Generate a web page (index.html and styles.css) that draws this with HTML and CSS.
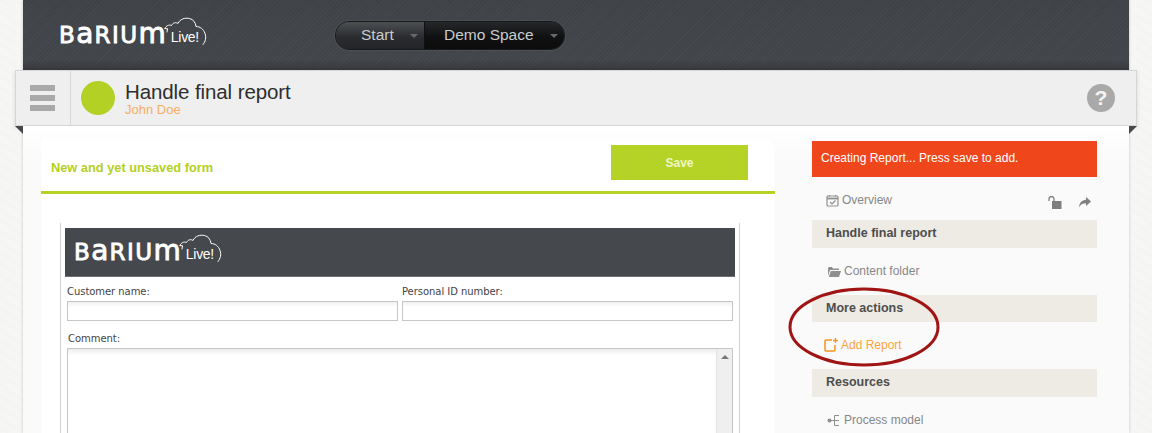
FILE: index.html
```html
<!DOCTYPE html>
<html lang="en">
<head>
<meta charset="utf-8">
<title>Handle final report</title>
<link rel="stylesheet" href="styles.css">
</head>
<body>
<div class="shell">
  <header class="top">
    <div class="logo">
      <span class="logo-word">B<span class="logo-big">a</span>RIU<span class="logo-big">m</span></span>
      <span class="logo-cloud">
        <svg width="44" height="30" viewBox="0 0 44 30" fill="none" stroke="#fff" stroke-width="1" stroke-linecap="round"><path d="M1 11.500C2 8.500 5 7.500 7.500 8.500C9 5.500 12 5 14 6.500C16 2 21 0.500 25.500 1.500C29.500 2.500 31.500 5.500 32 9.500C36 9.500 39.500 12 41 16.500C42.500 20.500 41.500 24.500 39 27.500"/><path d="M1 11.500L3.500 12M3 15L3.500 12"/></svg>
        <span class="logo-live">Live!</span>
      </span>
    </div>
    <nav class="switch">
      <div class="switch-item switch-start"><span>Start</span><i class="caret"></i></div>
      <div class="switch-item switch-space"><span>Demo Space</span><i class="caret"></i></div>
    </nav>
  </header>

  <section class="bar">
    <div class="menu"><i></i><i></i><i></i></div>
    <div class="status"></div>
    <div class="titles">
      <h1>Handle final report</h1>
      <p>John Doe</p>
    </div>
    <div class="help">?</div>
  </section>

  <main class="main">
    <section class="card">
      <div class="card-head">
        <h2>New and yet unsaved form</h2>
        <button class="save" type="button">Save</button>
      </div>
      <div class="form">
        <div class="banner">
          <div class="logo">
            <span class="logo-word">B<span class="logo-big">a</span>RIU<span class="logo-big">m</span></span>
            <span class="logo-cloud">
              <svg width="44" height="30" viewBox="0 0 44 30" fill="none" stroke="#fff" stroke-width="1" stroke-linecap="round"><path d="M1 11.500C2 8.500 5 7.500 7.500 8.500C9 5.500 12 5 14 6.500C16 2 21 0.500 25.500 1.500C29.500 2.500 31.500 5.500 32 9.500C36 9.500 39.500 12 41 16.500C42.500 20.500 41.500 24.500 39 27.500"/><path d="M1 11.500L3.500 12M3 15L3.500 12"/></svg>
              <span class="logo-live">Live!</span>
            </span>
          </div>
        </div>
        <div class="fields">
          <div class="field">
            <label>Customer name:</label>
            <div class="input"></div>
          </div>
          <div class="field">
            <label>Personal ID number:</label>
            <div class="input"></div>
          </div>
        </div>
        <div class="comment">
          <label>Comment:</label>
          <div class="textarea">
            <div class="scroll"><i></i></div>
          </div>
        </div>
      </div>
    </section>

    <aside class="side">
      <div class="notice">Creating Report... Press save to add.</div>
      <div class="row row-overview">
        <svg class="ico" width="13" height="13" viewBox="0 0 13 13" fill="none" stroke="#8f8f8f" stroke-width="1.200"><rect x="1" y="2" width="11" height="10" rx="1"/><path d="M1 4.500H12" stroke-width="1.800"/><path d="M3.500 1V2.500M9.500 1V2.500"/><path d="M4 8L6 10L9.500 6.500"/></svg>
        <span>Overview</span>
        <span class="row-tools">
          <svg width="14" height="13" viewBox="0 0 14 13" fill="#7f7f7f"><rect x="4" y="5" width="9.500" height="8"/><path d="M1 5V3A2.500 2.500 0 0 1 6 3V5" fill="none" stroke="#7f7f7f" stroke-width="1.300"/></svg>
          <svg width="12" height="10" viewBox="0 0 12 10" fill="#7f7f7f"><path d="M7 0L12 4.500L7 9V6.300C4 6.300 2 7.300 0 10C0.500 6 3 3 7 2.800Z"/></svg>
        </span>
      </div>
      <h3 class="section">Handle final report</h3>
      <div class="row row-folder">
        <svg class="ico" width="13" height="11" viewBox="0 0 13 11" fill="#8f8f8f"><path d="M0 2V10L2 4H11V2.500H5L4 1H1Z"/><path d="M2.800 5H13L11 11H0.800Z"/></svg>
        <span>Content folder</span>
      </div>
      <h3 class="section">More actions</h3>
      <div class="row row-add">
        <svg class="ico" width="14" height="14" viewBox="0 0 14 14" fill="none" stroke="#f7931e" stroke-width="1.500"><path d="M8 2H2Q1 2 1 3V12Q1 13 2 13H10Q11 13 11 12V7"/><path d="M11.500 0V5M9 2.500H14" stroke-width="1.300"/></svg>
        <span>Add Report</span>
      </div>
      <h3 class="section">Resources</h3>
      <div class="row row-process">
        <svg class="ico" width="16" height="13" viewBox="0 0 16 13" fill="none" stroke="#8f8f8f"><circle cx="2.500" cy="6.500" r="2" fill="#8f8f8f" stroke="none"/><path d="M4 6.500H7M12 1.500H7.500V11.500H12M7.500 6.500H12"/></svg>
        <span>Process model</span>
      </div>
      <svg class="ring" width="154" height="82" viewBox="0 0 154 82" fill="none"><ellipse cx="76" cy="40" rx="74" ry="38" stroke="#a01414" stroke-width="3"/></svg>
    </aside>
  </main>
</div>
</body>
</html>
```
FILE: styles.css
```css
* { box-sizing: border-box; }
html, body { margin: 0; padding: 0; height: 433px; overflow: hidden; }
body {
  background: repeating-linear-gradient(35deg, #f6f6f5 0 3px, #f4f4f3 3px 5px, #f6f6f5 5px 9px);
  font-family: "Liberation Sans", Arial, sans-serif;
}
h1, h2, h3, p { margin: 0; font-weight: normal; }
i { display: block; }

.shell {
  width: 1106px;
  height: 433px;
  margin-left: 23px;
  background: #fafafa;
  box-shadow: 0 0 3px rgba(0,0,0,.2);
}

/* top band */
.top {
  height: 70px;
  display: flex;
  align-items: flex-start;
  padding: 21px 0 0 36px;
  background:
    repeating-linear-gradient(135deg, rgba(255,255,255,.012) 0 1px, rgba(0,0,0,.03) 1px 3px),
    linear-gradient(#414449, #44474c 85%, #38393d);
}
.logo { display: flex; align-items: flex-start; width: 148px; height: 32px; color: #fff; }
.logo-word {
  display: flex;
  align-items: baseline;
  height: 24px;
  font-family: "DejaVu Sans", sans-serif;
  font-size: 23px;
  line-height: 24px;
  letter-spacing: 1.500px;
  margin-top: 1px;
  -webkit-text-stroke: .9px #fff;
}
.logo-big { font-size: 28px; letter-spacing: 1px; }
.logo-cloud { position: relative; display: block; width: 44px; height: 30px; margin-top: -4px; margin-left: -3px; }
.logo-cloud svg { display: block; }
.logo-live {
  position: absolute;
  left: 7px;
  top: 13px;
  font-family: "Liberation Sans", sans-serif;
  font-size: 14px;
  line-height: 15px;
  color: #fff;
  letter-spacing: -.3px;
}
.switch {
  display: flex;
  margin-left: 128px;
  height: 29px;
  width: 230px;
  border: 1px solid #17181a;
  border-radius: 14px;
  overflow: hidden;
  box-shadow: 0 0 0 1px rgba(255,255,255,.05);
}
.switch-item {
  display: flex;
  align-items: center;
  position: relative;
  font-size: 15.500px;
  color: #c9ccce;
}
.switch-item span { margin-top: -2px; }
.switch-start {
  width: 89px;
  padding-left: 25px;
  background: linear-gradient(#4d5053, #2b2c2f 55%, #232427);
  border-right: 1px solid #111;
}
.switch-space {
  flex: 1;
  padding-left: 19px;
  background: linear-gradient(#26272a, #101112 55%, #0c0c0d);
}
.caret {
  position: absolute;
  right: 6px;
  top: 12px;
  width: 0;
  height: 0;
  border: 4px solid transparent;
  border-top-color: #66686b;
  border-bottom: 0;
}

/* title bar */
.bar {
  position: relative;
  display: flex;
  align-items: center;
  width: 1122px;
  height: 56px;
  margin-left: -8px;
  background: #efefef;
  border: 1px solid #d6d6d6;
  box-shadow: 0 2px 4px rgba(0,0,0,.12);
}
.bar::before, .bar::after {
  content: "";
  position: absolute;
  top: 55px;
  width: 0;
  height: 0;
  border-top: 8px solid #44474c;
}
.bar::before { left: -1px; border-left: 8px solid transparent; }
.bar::after { right: -1px; border-right: 8px solid transparent; }
.menu {
  flex: none;
  width: 55px;
  height: 54px;
  padding: 14px 0 0 14px;
  border-right: 1px solid #d6d6d6;
}
.menu i { width: 25px; height: 6px; margin-bottom: 4px; background: #a9a9a9; }
.status {
  flex: none;
  width: 34px;
  height: 34px;
  margin-left: 10px;
  border-radius: 50%;
  background: #b3d024;
}
.titles { margin-left: 10px; flex: 1; }
.titles h1 { font-size: 20.500px; line-height: 24px; color: #2e2e2e; letter-spacing: -.1px; }
.titles p { font-size: 13px; line-height: 13px; color: #f7ae63; margin-top: -1px; }
.help {
  flex: none;
  width: 28px;
  height: 28px;
  margin-right: 21px;
  border-radius: 50%;
  background: #a9a9a9;
  color: #f4f4f4;
  font-weight: bold;
  font-size: 21px;
  line-height: 28px;
  text-align: center;
}

/* main */
.main {
  display: flex;
  align-items: flex-start;
  height: 307px;
  padding: 13px 0 0 18px;
  overflow: hidden;
  background: linear-gradient(#fff, #fafafa 30px);
  position: relative;
}
.card {
  width: 734px;
  height: 300px;
  flex: none;
  background: #fff;
  border-top-right-radius: 12px;
}
.card-head {
  display: flex;
  align-items: flex-start;
  justify-content: space-between;
  height: 55px;
  padding: 6px 27px 0 10px;
  border-bottom: 3px solid #b6d225;
}
.card-head h2 { font-size: 12.800px; font-weight: bold; color: #b3d024; line-height: 45px; }
.save {
  width: 137px;
  height: 35px;
  padding: 0;
  background: #b5d326;
  color: #f0f6c8;
  border: 0;
  font: bold 12px "Liberation Sans", sans-serif;
}
.form {
  width: 680px;
  height: 240px;
  margin: 29px 0 0 19px;
  padding: 5px 4px 0;
  border-left: 1px solid #cfcfcf;
  border-right: 1px solid #cfcfcf;
}
.banner {
  height: 49px;
  padding: 10px 0 0 9px;
  background: #45484c;
  border-bottom: 1px solid #6b6d70;
}
.fields { display: flex; gap: 4px; padding: 0 2px; margin-top: 8px; }
.field { width: 331px; }
label {
  display: block;
  font-family: "DejaVu Sans", Verdana, sans-serif;
  font-size: 10px;
  letter-spacing: -.05px;
  line-height: 13px;
  color: #444;
}
.input {
  height: 20px;
  margin-top: 3px;
  background: linear-gradient(#f0f0f0, #fff 5px);
  border: 1px solid #c6c6c6;
}
.comment { margin-top: 11px; padding: 0 2px; }
.comment label { padding-left: 1px; }
.textarea {
  position: relative;
  height: 120px;
  margin-top: 3px;
  background: linear-gradient(#ececec, #fff 6px);
  border: 1px solid #c6c6c6;
}
.scroll {
  position: absolute;
  top: 0;
  right: 0;
  bottom: 0;
  width: 16px;
  background: #efefef;
  border-left: 1px solid #e4e4e4;
  padding: 6px 0 0 4px;
}
.scroll i {
  width: 0;
  height: 0;
  border: 4px solid transparent;
  border-bottom-color: #777;
  border-top: 0;
}

/* sidebar */
.side {
  position: relative;
  flex: none;
  width: 285px;
  margin-left: 37px;
  margin-top: 2px;
}
.notice {
  height: 36px;
  padding-left: 9px;
  background: #f0461c;
  color: #fff;
  font-size: 12px;
  line-height: 34px;
}
.section {
  height: 27.500px;
  padding-left: 14px;
  background: #eeebe4;
  color: #4d4d4d;
  font-size: 12.500px;
  font-weight: bold;
  line-height: 27px;
}
.row {
  display: flex;
  align-items: center;
  font-size: 12px;
  color: #878787;
  padding-left: 14px;
}
.row .ico { margin-right: 3px; flex: none; }
.row-overview { height: 43px; padding-top: 3px; }
.row-folder { height: 47px; padding-left: 16px; }
.row-add { height: 47px; padding-left: 12px; padding-bottom: 2px; color: #f9a33f; }
.row-process { height: 47px; padding-left: 15px; }
.row-process .ico { margin-right: 1px; }
.row-tools {
  display: flex;
  align-items: center;
  gap: 17px;
  margin-left: auto;
  margin-right: 6px;
  padding-top: 4px;
}
.ring {
  position: absolute;
  left: -24px;
  top: 146px;
}
```
